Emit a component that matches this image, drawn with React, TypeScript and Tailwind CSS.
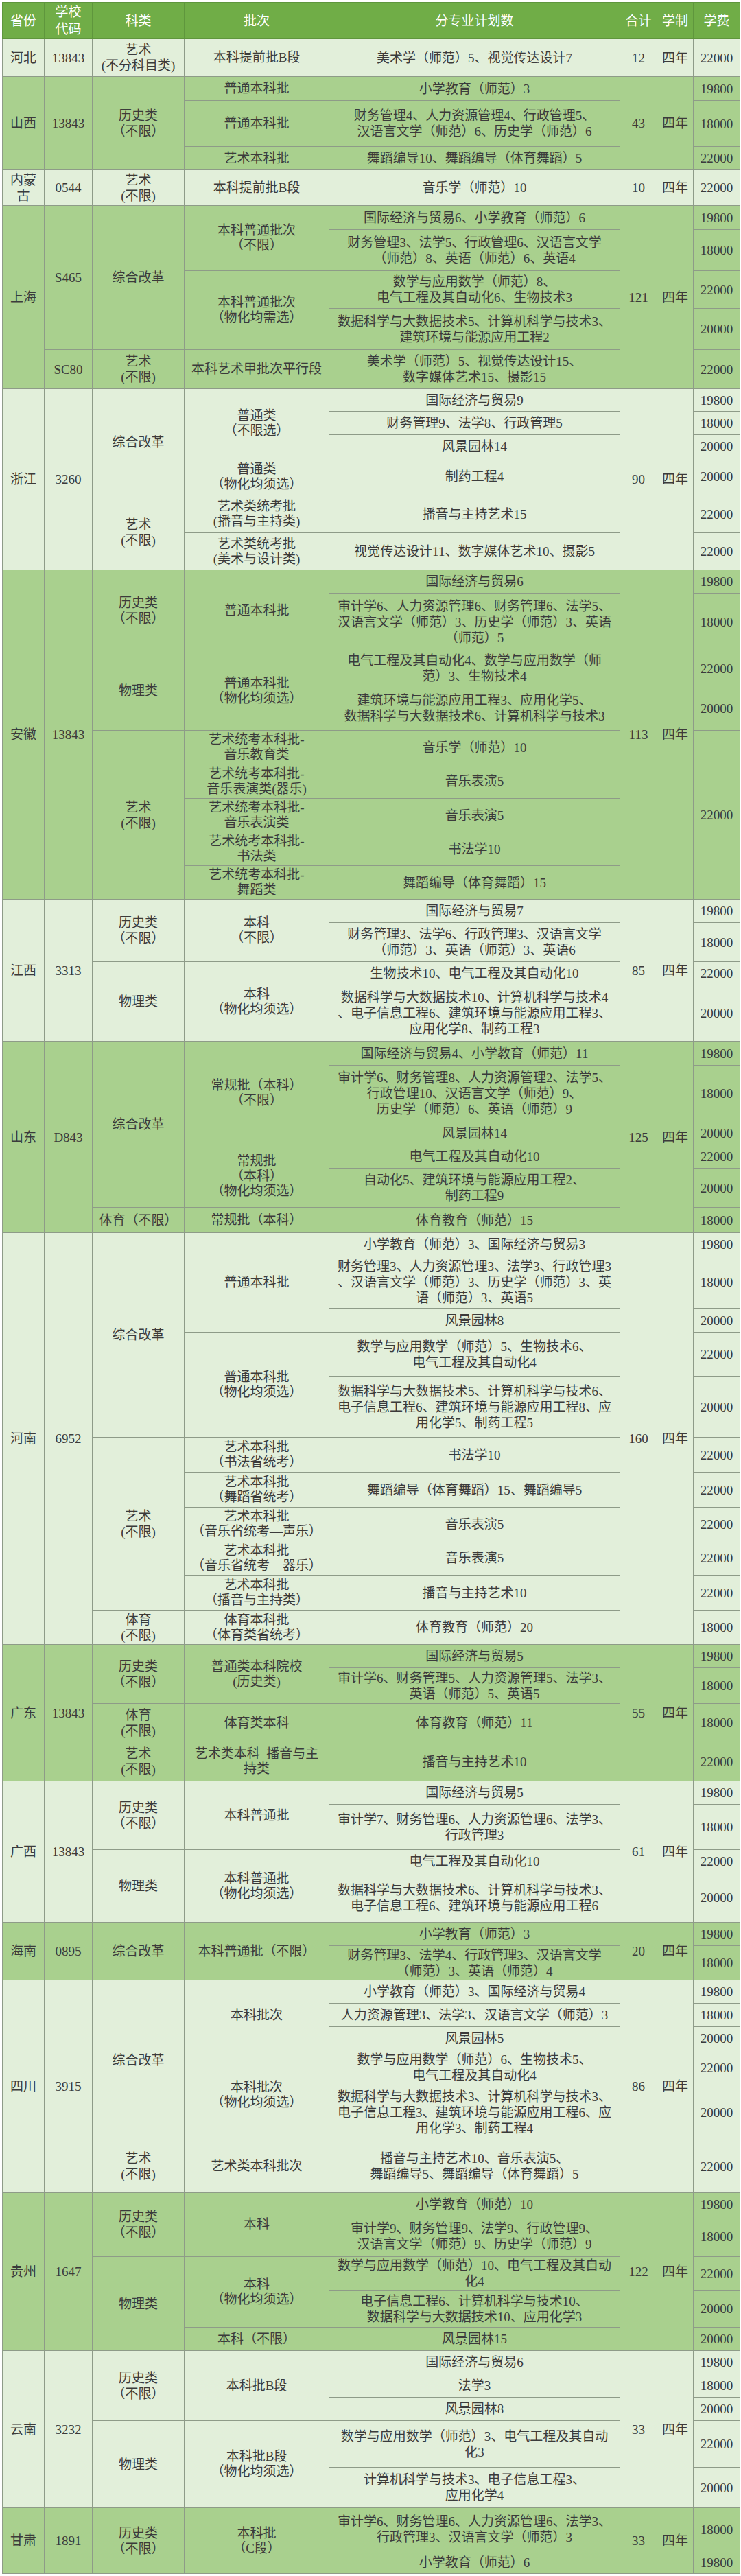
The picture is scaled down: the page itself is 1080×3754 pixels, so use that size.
import React from "react";

type Leaf = { text: string; fee?: string; feeSpan?: number; h: number };
type Batch = { name: string; leaves: Leaf[] };
type Group = { kind: string; batches: Batch[] };
type School = { code: string; groups: Group[] };
type Province = { name: string; total: string; schools: School[] };

const provinces: Province[] = [
  {
    name: "河北",
    total: "12",
    schools: [
      {
        code: "13843",
        groups: [
          {
            kind: "艺术\n(不分科目类)",
            batches: [{ name: "本科提前批B段", leaves: [{ text: "美术学（师范）5、视觉传达设计7", fee: "22000", h: 55 }] }],
          },
        ],
      },
    ],
  },
  {
    name: "山西",
    total: "43",
    schools: [
      {
        code: "13843",
        groups: [
          {
            kind: "历史类\n（不限）",
            batches: [
              { name: "普通本科批", leaves: [{ text: "小学教育（师范）3", fee: "19800", h: 35 }] },
              {
                name: "普通本科批",
                leaves: [{ text: "财务管理4、人力资源管理4、行政管理5、\n汉语言文学（师范）6、历史学（师范）6", fee: "18000", h: 67 }],
              },
              { name: "艺术本科批", leaves: [{ text: "舞蹈编导10、舞蹈编导（体育舞蹈）5", fee: "22000", h: 34 }] },
            ],
          },
        ],
      },
    ],
  },
  {
    name: "内蒙\n古",
    total: "10",
    schools: [
      {
        code: "0544",
        groups: [
          {
            kind: "艺术\n(不限)",
            batches: [{ name: "本科提前批B段", leaves: [{ text: "音乐学（师范）10", fee: "22000", h: 52 }] }],
          },
        ],
      },
    ],
  },
  {
    name: "上海",
    total: "121",
    schools: [
      {
        code: "S465",
        groups: [
          {
            kind: "综合改革",
            batches: [
              {
                name: "本科普通批次\n（不限）",
                leaves: [
                  { text: "国际经济与贸易6、小学教育（师范）6", fee: "19800", h: 35 },
                  { text: "财务管理3、法学5、行政管理6、汉语言文学\n（师范）8、英语（师范）6、英语4", fee: "18000", h: 60 },
                ],
              },
              {
                name: "本科普通批次\n（物化均需选）",
                leaves: [
                  { text: "数学与应用数学（师范）8、\n电气工程及其自动化6、生物技术3", fee: "22000", h: 55 },
                  { text: "数据科学与大数据技术5、计算机科学与技术3、\n建筑环境与能源应用工程2", fee: "20000", h: 60 },
                ],
              },
            ],
          },
        ],
      },
      {
        code: "SC80",
        groups: [
          {
            kind: "艺术\n(不限)",
            batches: [
              {
                name: "本科艺术甲批次平行段",
                leaves: [{ text: "美术学（师范）5、视觉传达设计15、\n数字媒体艺术15、摄影15", fee: "22000", h: 57 }],
              },
            ],
          },
        ],
      },
    ],
  },
  {
    name: "浙江",
    total: "90",
    schools: [
      {
        code: "3260",
        groups: [
          {
            kind: "综合改革",
            batches: [
              {
                name: "普通类\n（不限选）",
                leaves: [
                  { text: "国际经济与贸易9", fee: "19800", h: 33 },
                  { text: "财务管理9、法学8、行政管理5", fee: "18000", h: 34 },
                  { text: "风景园林14", fee: "20000", h: 34 },
                ],
              },
              { name: "普通类\n（物化均须选）", leaves: [{ text: "制药工程4", fee: "20000", h: 54 }] },
            ],
          },
          {
            kind: "艺术\n(不限)",
            batches: [
              { name: "艺术类统考批\n(播音与主持类)", leaves: [{ text: "播音与主持艺术15", fee: "22000", h: 55 }] },
              {
                name: "艺术类统考批\n(美术与设计类)",
                leaves: [{ text: "视觉传达设计11、数字媒体艺术10、摄影5", fee: "22000", h: 54 }],
              },
            ],
          },
        ],
      },
    ],
  },
  {
    name: "安徽",
    total: "113",
    schools: [
      {
        code: "13843",
        groups: [
          {
            kind: "历史类\n（不限）",
            batches: [
              {
                name: "普通本科批",
                leaves: [
                  { text: "国际经济与贸易6", fee: "19800", h: 34 },
                  {
                    text: "审计学6、人力资源管理6、财务管理6、法学5、\n汉语言文学（师范）3、历史学（师范）3、英语\n（师范）5",
                    fee: "18000",
                    h: 84,
                  },
                ],
              },
            ],
          },
          {
            kind: "物理类",
            batches: [
              {
                name: "普通本科批\n（物化均须选）",
                leaves: [
                  { text: "电气工程及其自动化4、数学与应用数学（师\n范）3、生物技术4", fee: "22000", h: 51 },
                  { text: "建筑环境与能源应用工程3、应用化学5、\n数据科学与大数据技术6、计算机科学与技术3", fee: "20000", h: 65 },
                ],
              },
            ],
          },
          {
            kind: "艺术\n(不限)",
            batches: [
              { name: "艺术统考本科批-\n音乐教育类", leaves: [{ text: "音乐学（师范）10", fee: "22000", feeSpan: 5, h: 49 }] },
              { name: "艺术统考本科批-\n音乐表演类(器乐)", leaves: [{ text: "音乐表演5", h: 50 }] },
              { name: "艺术统考本科批-\n音乐表演类", leaves: [{ text: "音乐表演5", h: 49 }] },
              { name: "艺术统考本科批-\n书法类", leaves: [{ text: "书法学10", h: 49 }] },
              { name: "艺术统考本科批-\n舞蹈类", leaves: [{ text: "舞蹈编导（体育舞蹈）15", h: 49 }] },
            ],
          },
        ],
      },
    ],
  },
  {
    name: "江西",
    total: "85",
    schools: [
      {
        code: "3313",
        groups: [
          {
            kind: "历史类\n（不限）",
            batches: [
              {
                name: "本科\n（不限）",
                leaves: [
                  { text: "国际经济与贸易7", fee: "19800", h: 34 },
                  { text: "财务管理3、法学6、行政管理3、汉语言文学\n（师范）3、英语（师范）3、英语6", fee: "18000", h: 57 },
                ],
              },
            ],
          },
          {
            kind: "物理类",
            batches: [
              {
                name: "本科\n（物化均须选）",
                leaves: [
                  { text: "生物技术10、电气工程及其自动化10", fee: "22000", h: 34 },
                  {
                    text: "数据科学与大数据技术10、计算机科学与技术4\n、电子信息工程6、建筑环境与能源应用工程3、\n应用化学8、制药工程3",
                    fee: "20000",
                    h: 82,
                  },
                ],
              },
            ],
          },
        ],
      },
    ],
  },
  {
    name: "山东",
    total: "125",
    schools: [
      {
        code: "D843",
        groups: [
          {
            kind: "综合改革",
            batches: [
              {
                name: "常规批（本科）\n（不限）",
                leaves: [
                  { text: "国际经济与贸易4、小学教育（师范）11", fee: "19800", h: 35 },
                  {
                    text: "审计学6、财务管理8、人力资源管理2、法学5、\n行政管理10、汉语言文学（师范）9、\n历史学（师范）6、英语（师范）9",
                    fee: "18000",
                    h: 81,
                  },
                  { text: "风景园林14", fee: "20000", h: 35 },
                ],
              },
              {
                name: "常规批\n（本科）\n（物化均须选）",
                leaves: [
                  { text: "电气工程及其自动化10", fee: "22000", h: 34 },
                  { text: "自动化5、建筑环境与能源应用工程2、\n制药工程9", fee: "20000", h: 57 },
                ],
              },
            ],
          },
          {
            kind: "体育（不限）",
            batches: [{ name: "常规批（本科）", leaves: [{ text: "体育教育（师范）15", fee: "18000", h: 37 }] }],
          },
        ],
      },
    ],
  },
  {
    name: "河南",
    total: "160",
    schools: [
      {
        code: "6952",
        groups: [
          {
            kind: "综合改革",
            batches: [
              {
                name: "普通本科批",
                leaves: [
                  { text: "小学教育（师范）3、国际经济与贸易3", fee: "19800", h: 34 },
                  {
                    text: "财务管理3、人力资源管理3、法学3、行政管理3\n、汉语言文学（师范）3、历史学（师范）3、英\n语（师范）3、英语5",
                    fee: "18000",
                    h: 76,
                  },
                  { text: "风景园林8", fee: "20000", h: 35 },
                ],
              },
              {
                name: "普通本科批\n（物化均须选）",
                leaves: [
                  { text: "数学与应用数学（师范）5、生物技术6、\n电气工程及其自动化4", fee: "22000", h: 64 },
                  {
                    text: "数据科学与大数据技术5、计算机科学与技术6、\n电子信息工程6、建筑环境与能源应用工程8、应\n用化学5、制药工程5",
                    fee: "20000",
                    h: 89,
                  },
                ],
              },
            ],
          },
          {
            kind: "艺术\n(不限)",
            batches: [
              { name: "艺术本科批\n（书法省统考）", leaves: [{ text: "书法学10", fee: "22000", h: 51 }] },
              { name: "艺术本科批\n（舞蹈省统考）", leaves: [{ text: "舞蹈编导（体育舞蹈）15、舞蹈编导5", fee: "22000", h: 51 }] },
              { name: "艺术本科批\n（音乐省统考—声乐）", leaves: [{ text: "音乐表演5", fee: "22000", h: 49 }] },
              { name: "艺术本科批\n（音乐省统考—器乐）", leaves: [{ text: "音乐表演5", fee: "22000", h: 50 }] },
              { name: "艺术本科批\n（播音与主持类）", leaves: [{ text: "播音与主持艺术10", fee: "22000", h: 51 }] },
            ],
          },
          {
            kind: "体育\n(不限)",
            batches: [{ name: "体育本科批\n（体育类省统考）", leaves: [{ text: "体育教育（师范）20", fee: "18000", h: 50 }] }],
          },
        ],
      },
    ],
  },
  {
    name: "广东",
    total: "55",
    schools: [
      {
        code: "13843",
        groups: [
          {
            kind: "历史类\n（不限）",
            batches: [
              {
                name: "普通类本科院校\n(历史类)",
                leaves: [
                  { text: "国际经济与贸易5", fee: "19800", h: 34 },
                  { text: "审计学6、财务管理5、人力资源管理5、法学3、\n英语（师范）5、英语5", fee: "18000", h: 52 },
                ],
              },
            ],
          },
          {
            kind: "体育\n(不限)",
            batches: [{ name: "体育类本科", leaves: [{ text: "体育教育（师范）11", fee: "18000", h: 56 }] }],
          },
          {
            kind: "艺术\n(不限)",
            batches: [{ name: "艺术类本科_播音与主\n持类", leaves: [{ text: "播音与主持艺术10", fee: "22000", h: 57 }] }],
          },
        ],
      },
    ],
  },
  {
    name: "广西",
    total: "61",
    schools: [
      {
        code: "13843",
        groups: [
          {
            kind: "历史类\n（不限）",
            batches: [
              {
                name: "本科普通批",
                leaves: [
                  { text: "国际经济与贸易5", fee: "19800", h: 34 },
                  { text: "审计学7、财务管理6、人力资源管理6、法学3、\n行政管理3", fee: "18000", h: 66 },
                ],
              },
            ],
          },
          {
            kind: "物理类",
            batches: [
              {
                name: "本科普通批\n（物化均须选）",
                leaves: [
                  { text: "电气工程及其自动化10", fee: "22000", h: 34 },
                  { text: "数据科学与大数据技术6、计算机科学与技术3、\n电子信息工程6、建筑环境与能源应用工程6", fee: "20000", h: 72 },
                ],
              },
            ],
          },
        ],
      },
    ],
  },
  {
    name: "海南",
    total: "20",
    schools: [
      {
        code: "0895",
        groups: [
          {
            kind: "综合改革",
            batches: [
              {
                name: "本科普通批（不限）",
                leaves: [
                  { text: "小学教育（师范）3", fee: "19800", h: 34 },
                  { text: "财务管理3、法学4、行政管理3、汉语言文学\n（师范）3、英语（师范）4", fee: "18000", h: 50 },
                ],
              },
            ],
          },
        ],
      },
    ],
  },
  {
    name: "四川",
    total: "86",
    schools: [
      {
        code: "3915",
        groups: [
          {
            kind: "综合改革",
            batches: [
              {
                name: "本科批次",
                leaves: [
                  { text: "小学教育（师范）3、国际经济与贸易4", fee: "19800", h: 34 },
                  { text: "人力资源管理3、法学3、汉语言文学（师范）3", fee: "18000", h: 34 },
                  { text: "风景园林5", fee: "20000", h: 34 },
                ],
              },
              {
                name: "本科批次\n（物化均须选）",
                leaves: [
                  { text: "数学与应用数学（师范）6、生物技术5、\n电气工程及其自动化4", fee: "22000", h: 51 },
                  {
                    text: "数据科学与大数据技术3、计算机科学与技术3、\n电子信息工程3、建筑环境与能源应用工程6、应\n用化学3、制药工程4",
                    fee: "20000",
                    h: 80,
                  },
                ],
              },
            ],
          },
          {
            kind: "艺术\n(不限)",
            batches: [
              {
                name: "艺术类本科批次",
                leaves: [{ text: "播音与主持艺术10、音乐表演5、\n舞蹈编导5、舞蹈编导（体育舞蹈）5", fee: "22000", h: 77 }],
              },
            ],
          },
        ],
      },
    ],
  },
  {
    name: "贵州",
    total: "122",
    schools: [
      {
        code: "1647",
        groups: [
          {
            kind: "历史类\n（不限）",
            batches: [
              {
                name: "本科",
                leaves: [
                  { text: "小学教育（师范）10", fee: "19800", h: 34 },
                  { text: "审计学9、财务管理9、法学9、行政管理9、\n汉语言文学（师范）9、历史学（师范）9", fee: "18000", h: 59 },
                ],
              },
            ],
          },
          {
            kind: "物理类",
            batches: [
              {
                name: "本科\n（物化均须选）",
                leaves: [
                  { text: "数学与应用数学（师范）10、电气工程及其自动\n化4", fee: "22000", h: 49 },
                  { text: "电子信息工程6、计算机科学与技术10、\n数据科学与大数据技术10、应用化学3", fee: "20000", h: 54 },
                ],
              },
              { name: "本科（不限）", leaves: [{ text: "风景园林15", fee: "20000", h: 34 }] },
            ],
          },
        ],
      },
    ],
  },
  {
    name: "云南",
    total: "33",
    schools: [
      {
        code: "3232",
        groups: [
          {
            kind: "历史类\n（不限）",
            batches: [
              {
                name: "本科批B段",
                leaves: [
                  { text: "国际经济与贸易6", fee: "19800", h: 34 },
                  { text: "法学3", fee: "18000", h: 34 },
                  { text: "风景园林8", fee: "20000", h: 34 },
                ],
              },
            ],
          },
          {
            kind: "物理类",
            batches: [
              {
                name: "本科批B段\n（物化均须选）",
                leaves: [
                  { text: "数学与应用数学（师范）3、电气工程及其自动\n化3", fee: "22000", h: 68 },
                  { text: "计算机科学与技术3、电子信息工程3、\n应用化学4", fee: "20000", h: 59 },
                ],
              },
            ],
          },
        ],
      },
    ],
  },
  {
    name: "甘肃",
    total: "33",
    schools: [
      {
        code: "1891",
        groups: [
          {
            kind: "历史类\n（不限）",
            batches: [
              {
                name: "本科批\n（C段）",
                leaves: [
                  { text: "审计学6、财务管理6、人力资源管理6、法学3、\n行政管理3、汉语言文学（师范）3", fee: "18000", h: 63 },
                  { text: "小学教育（师范）6", fee: "19800", h: 33 },
                ],
              },
            ],
          },
        ],
      },
    ],
  },
];

const countBatch = (b: Batch) => b.leaves.length;
const countGroup = (g: Group) => g.batches.reduce((n, b) => n + countBatch(b), 0);
const countSchool = (s: School) => s.groups.reduce((n, g) => n + countGroup(g), 0);
const countProvince = (p: Province) => p.schools.reduce((n, s) => n + countSchool(s), 0);

const cell = "border border-[#8e9b88] p-0 text-center align-middle whitespace-pre-line";
const head = "border border-[#5f963d] p-0 text-center align-middle whitespace-pre-line font-normal text-white";

export default function App() {
  const rows: React.ReactNode[] = [];

  provinces.forEach((p, pi) => {
    const bg = pi % 2 === 0 ? "bg-[#e2efda]" : "bg-[#a9d08e]";
    const pCount = countProvince(p);
    let firstP = true;
    p.schools.forEach(s => {
      let firstS = true;
      s.groups.forEach(g => {
        let firstG = true;
        g.batches.forEach(b => {
          let firstB = true;
          b.leaves.forEach((l, li) => {
            rows.push(
              <tr key={`${pi}-${s.code}-${g.kind}-${b.name}-${li}-${rows.length}`} className={bg} style={{ height: l.h }}>
                {firstP && (
                  <td rowSpan={pCount} className={cell}>
                    {p.name}
                  </td>
                )}
                {firstS && (
                  <td rowSpan={countSchool(s)} className={cell}>
                    {s.code}
                  </td>
                )}
                {firstG && (
                  <td rowSpan={countGroup(g)} className={cell}>
                    {g.kind}
                  </td>
                )}
                {firstB && (
                  <td rowSpan={countBatch(b)} className={`${cell} leading-[22px]`}>
                    {b.name}
                  </td>
                )}
                <td className={cell}>{l.text}</td>
                {firstP && (
                  <td rowSpan={pCount} className={cell}>
                    {p.total}
                  </td>
                )}
                {firstP && (
                  <td rowSpan={pCount} className={cell}>
                    四年
                  </td>
                )}
                {l.fee !== undefined && (
                  <td rowSpan={l.feeSpan ?? 1} className={cell}>
                    {l.fee}
                  </td>
                )}
              </tr>
            );
            firstP = false;
            firstS = false;
            firstG = false;
            firstB = false;
          });
        });
      });
    });
  });

  return (
    <div className="bg-white min-h-[3754px] pt-[3px] pl-[3px]">
      <table
        className="table-fixed border-collapse w-[1075px] text-[19px] leading-[23px] text-[#3b3b3b]"
        style={{ fontFamily: '"Liberation Serif", "Noto Sans CJK SC", serif' }}
      >
        <colgroup>
          <col className="w-[61px]" />
          <col className="w-[70px]" />
          <col className="w-[134px]" />
          <col className="w-[211px]" />
          <col className="w-[424px]" />
          <col className="w-[54px]" />
          <col className="w-[53px]" />
          <col className="w-[68px]" />
        </colgroup>
        <thead>
          <tr className="bg-[#70ad47] h-[53px] leading-[25px]">
            <th className={head}>省份</th>
            <th className={head}>{"学校\n代码"}</th>
            <th className={head}>科类</th>
            <th className={head}>批次</th>
            <th className={head}>分专业计划数</th>
            <th className={head}>合计</th>
            <th className={head}>学制</th>
            <th className={head}>学费</th>
          </tr>
        </thead>
        <tbody>{rows}</tbody>
      </table>
    </div>
  );
}
